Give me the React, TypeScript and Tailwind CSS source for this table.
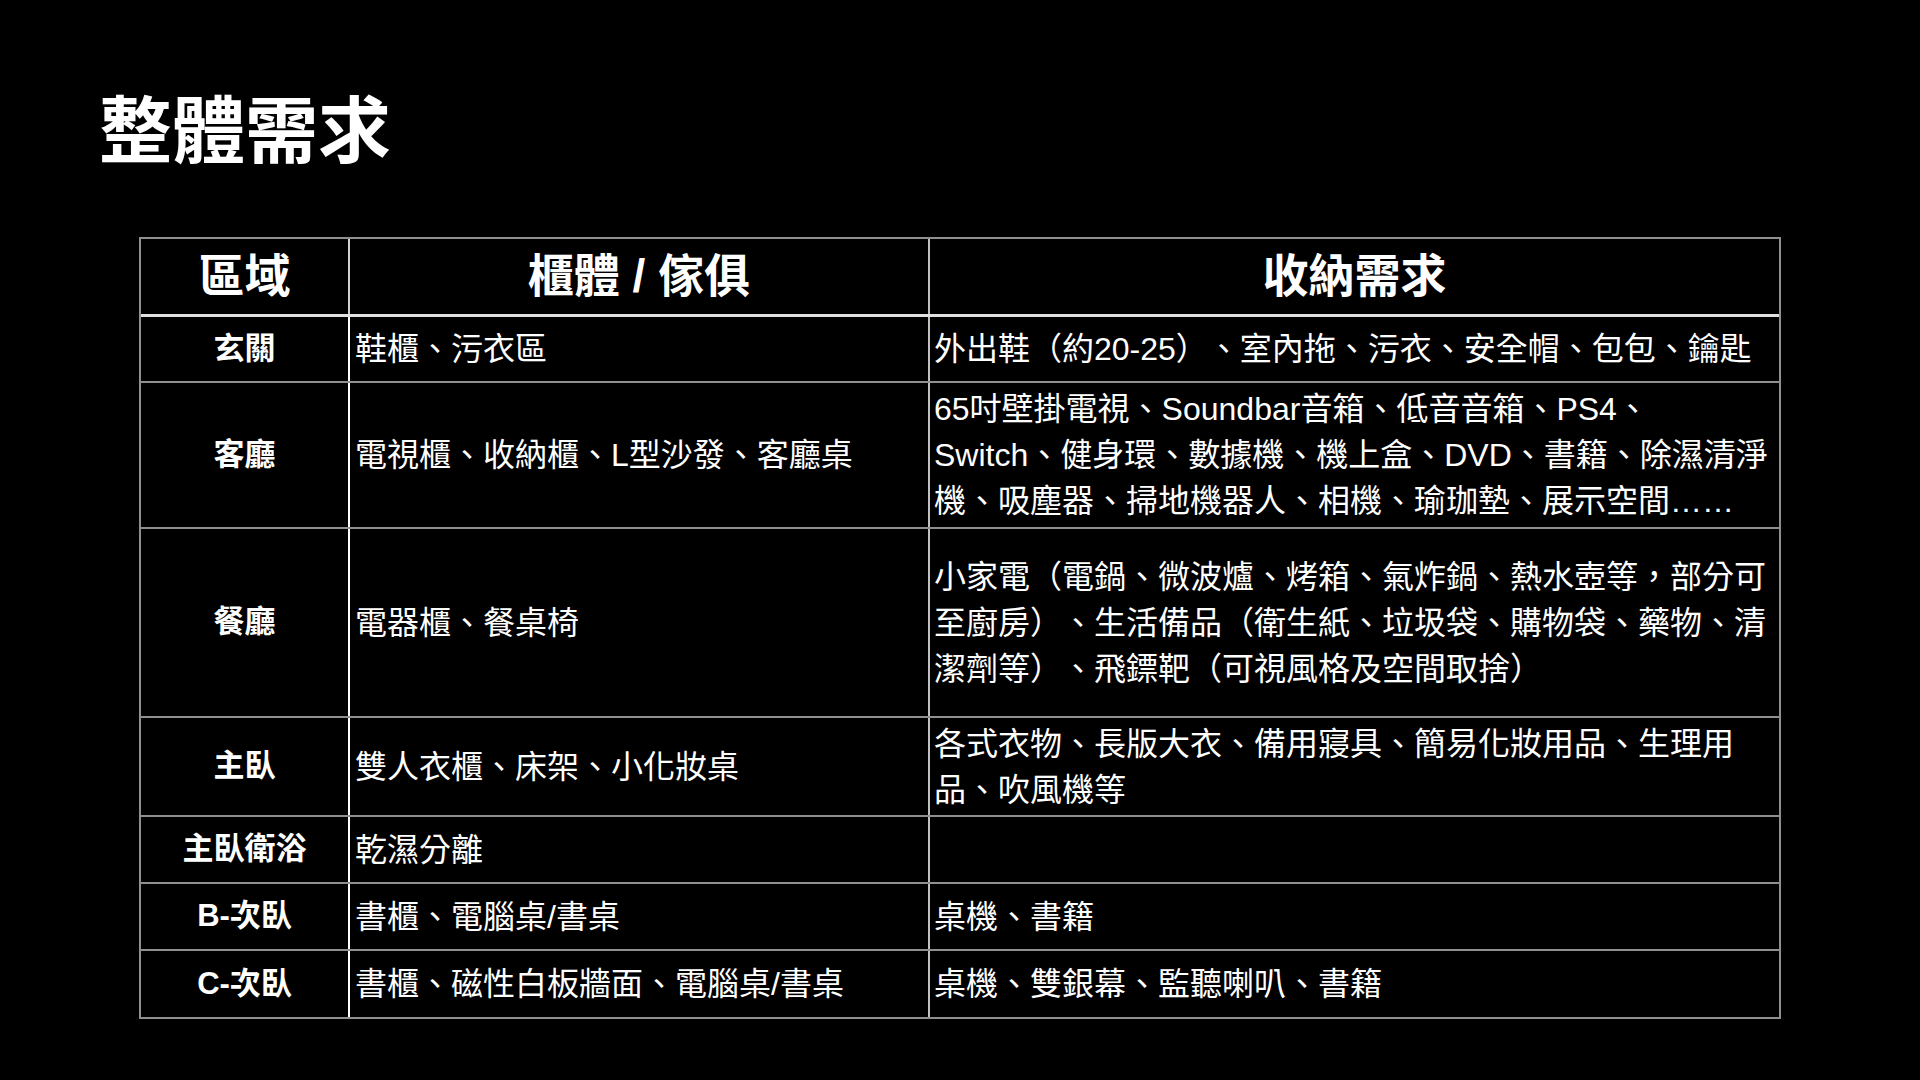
const font = { fontFamily: '"Liberation Sans", "Noto Sans CJK TC", sans-serif' };

type Row = { area: string; furniture: string; needs: string[]; h: string };

const rows: Row[] = [
  { area: "玄關", furniture: "鞋櫃、污衣區", needs: ["外出鞋（約20-25）、室內拖、污衣、安全帽、包包、鑰匙"], h: "h-[66px]" },
  {
    area: "客廳",
    furniture: "電視櫃、收納櫃、L型沙發、客廳桌",
    needs: [
      "65吋壁掛電視、Soundbar音箱、低音音箱、PS4、",
      "Switch、健身環、數據機、機上盒、DVD、書籍、除濕清淨",
      "機、吸塵器、掃地機器人、相機、瑜珈墊、展示空間……",
    ],
    h: "h-[146px]",
  },
  {
    area: "餐廳",
    furniture: "電器櫃、餐桌椅",
    needs: [
      "小家電（電鍋、微波爐、烤箱、氣炸鍋、熱水壺等，部分可",
      "至廚房）、生活備品（衛生紙、垃圾袋、購物袋、藥物、清",
      "潔劑等）、飛鏢靶（可視風格及空間取捨）",
    ],
    h: "h-[189px]",
  },
  {
    area: "主臥",
    furniture: "雙人衣櫃、床架、小化妝桌",
    needs: ["各式衣物、長版大衣、備用寢具、簡易化妝用品、生理用", "品、吹風機等"],
    h: "h-[99px]",
  },
  { area: "主臥衛浴", furniture: "乾濕分離", needs: [], h: "h-[67px]" },
  { area: "B-次臥", furniture: "書櫃、電腦桌/書桌", needs: ["桌機、書籍"], h: "h-[67px]" },
  { area: "C-次臥", furniture: "書櫃、磁性白板牆面、電腦桌/書桌", needs: ["桌機、雙銀幕、監聽喇叭、書籍"], h: "h-[66px]" },
];

export default function App() {
  return (
    <div
      className="w-[1920px] h-[1080px] bg-black text-white overflow-hidden [text-spacing-trim:space-all]"
      style={font}
    >
      <h1 className="pt-[95px] pl-[99px] text-[73px] font-bold leading-none">整體需求</h1>

      <div className="mt-[69px] ml-[139px] w-[1642px] border-2 border-[#8f8f8f]">
        <div className="flex h-[78px] border-b-[3px] border-[#e0e0e0] text-[46px] font-bold">
          <div className="w-[209px] shrink-0 flex items-center justify-center border-r-2 border-[#d0d0d0]">區域</div>
          <div className="w-[580px] shrink-0 flex items-center justify-center border-r-2 border-[#c0c0c0]">櫃體 / 傢俱</div>
          <div className="flex-1 flex items-center justify-center">收納需求</div>
        </div>

        {rows.map((r, i) => (
          <div
            key={r.area}
            className={`flex ${r.h} ${i < rows.length - 1 ? "border-b-2 border-[#8f8f8f]" : ""} text-[32px]`}
          >
            <div className="w-[209px] shrink-0 flex items-center justify-center border-r-2 border-white font-bold text-[31px]">
              {r.area}
            </div>
            <div className="w-[580px] shrink-0 flex items-center pl-[5px] border-r-2 border-[#c0c0c0] whitespace-nowrap">
              {r.furniture}
            </div>
            <div className="flex-1 flex flex-col justify-center pl-[4px] leading-[46px] whitespace-nowrap">
              {r.needs.map((line) => (
                <div key={line}>{line}</div>
              ))}
            </div>
          </div>
        ))}
      </div>
    </div>
  );
}
